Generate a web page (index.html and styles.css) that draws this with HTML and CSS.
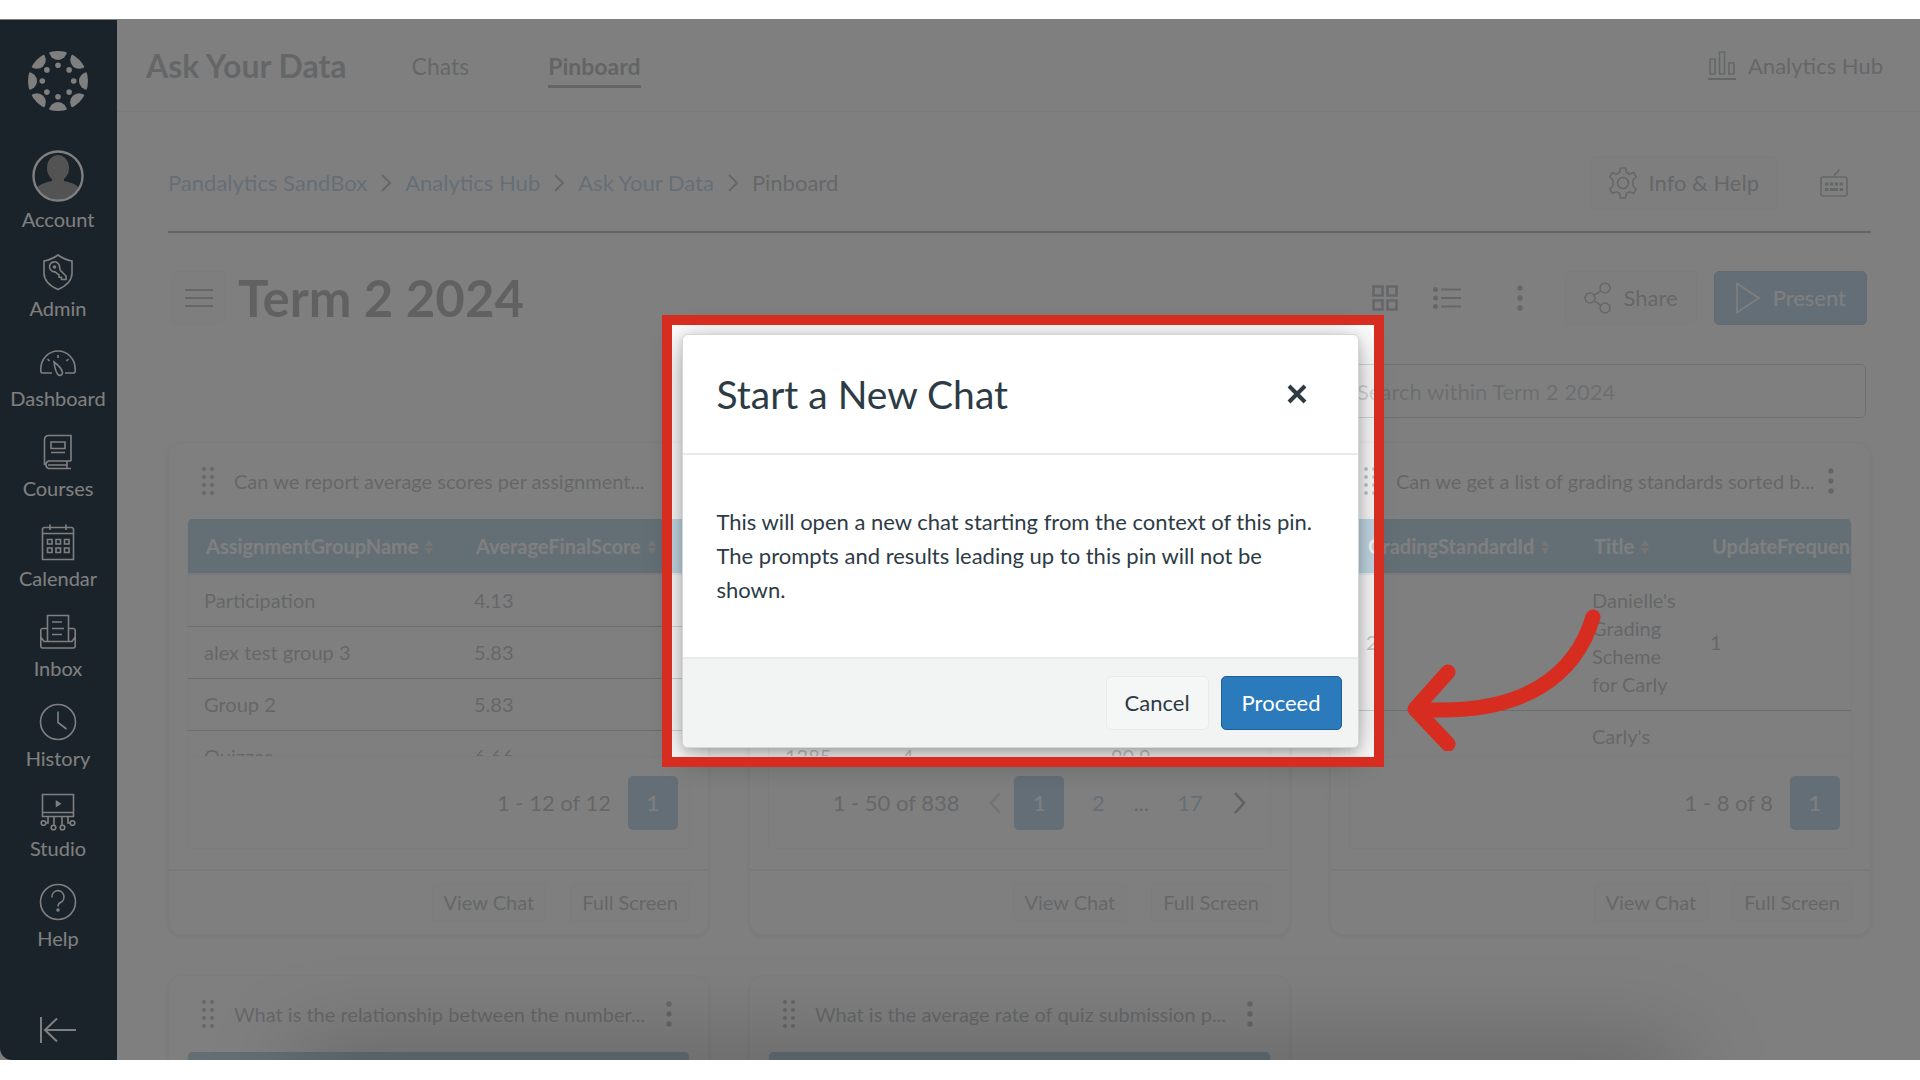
FILE: index.html
```html
<!DOCTYPE html>
<html lang="en">
<head>
<meta charset="utf-8">
<title>Ask Your Data - Pinboard</title>
<link rel="stylesheet" href="styles.css">
</head>
<body>
<svg class="defs" aria-hidden="true">
  <symbol id="grip" viewBox="0 0 14 30"><g fill="currentColor"><circle cx="3" cy="3" r="2"/><circle cx="11" cy="3" r="2"/><circle cx="3" cy="11" r="2"/><circle cx="11" cy="11" r="2"/><circle cx="3" cy="19" r="2"/><circle cx="11" cy="19" r="2"/><circle cx="3" cy="27" r="2"/><circle cx="11" cy="27" r="2"/></g></symbol>
  <symbol id="kebab" viewBox="0 0 6 28"><g fill="currentColor"><circle cx="3" cy="4" r="2.7"/><circle cx="3" cy="14" r="2.7"/><circle cx="3" cy="24" r="2.7"/></g></symbol>
  <symbol id="sort" viewBox="0 0 8 14"><path fill="currentColor" d="M4 0 8 6H0ZM4 14 0 8H8Z"/></symbol>
  <symbol id="chevron" viewBox="0 0 12 20"><path fill="none" stroke="currentColor" stroke-width="2" d="M2 2 10 10 2 18"/></symbol>
</svg>
<div class="frame">
  <nav class="sidebar" aria-label="Global navigation">
    <a class="logo" href="#" aria-label="Canvas">
      <svg viewBox="0 0 60 60" width="60" height="60">
        <clipPath id="disc"><circle cx="30" cy="30" r="30"/></clipPath>
        <g fill="#fff">
          <g clip-path="url(#disc)">
            <circle cx="30" cy="0" r="9"/><circle cx="51.2" cy="8.8" r="9"/><circle cx="60" cy="30" r="9"/><circle cx="51.2" cy="51.2" r="9"/>
            <circle cx="30" cy="60" r="9"/><circle cx="8.8" cy="51.2" r="9"/><circle cx="0" cy="30" r="9"/><circle cx="8.8" cy="8.8" r="9"/>
          </g>
          <circle cx="30" cy="14.3" r="2.8"/><circle cx="41.1" cy="18.9" r="2.8"/><circle cx="45.7" cy="30" r="2.8"/><circle cx="41.1" cy="41.1" r="2.8"/>
          <circle cx="30" cy="45.7" r="2.8"/><circle cx="18.9" cy="41.1" r="2.8"/><circle cx="14.3" cy="30" r="2.8"/><circle cx="18.9" cy="18.9" r="2.8"/>
        </g>
      </svg>
    </a>
    <a class="nav-item account" href="#">
      <svg viewBox="0 0 52 52" width="52" height="52">
        <clipPath id="face"><circle cx="26" cy="26" r="23.5"/></clipPath>
        <g clip-path="url(#face)" fill="#a6a6a6"><ellipse cx="26" cy="18" rx="11" ry="13"/><path d="M3 52V40C8 33 16 32 20 31V26H32V31C36 32 44 33 49 40V52Z"/></g>
        <circle cx="26" cy="26" r="24.5" fill="none" stroke="#fff" stroke-width="2.4"/>
      </svg>
      <span>Account</span>
    </a>
    <a class="nav-item" href="#">
      <svg viewBox="0 0 38 38" width="38" height="38"><path d="M19 2C23 5 28 7 33 8V20C33 28 27 33 19 36.500C11 33 5 28 5 20V8C10 7 15 5 19 2Z"/><path d="M21.500 17.500 27 23V26.500H22.500V24.500L20 24V22L16 18.800A5 5 0 1 1 20.500 13.500C20.800 15 20.500 16 21.500 17.500Z"/><circle cx="15.500" cy="14" r="1"/></svg>
      <span>Admin</span>
    </a>
    <a class="nav-item" href="#">
      <svg viewBox="0 0 38 38" width="38" height="38"><path d="M13 30H3.500C1.500 30 1.800 28 1.800 26A17.200 18 0 0 1 36.200 26C36.200 28 36.500 30 34.500 30H26"/><path d="M15 19C19 22 23 26 23.500 29.500A2.700 2.700 0 0 1 18.500 31C16.500 28 15.500 23 15 19Z"/><path d="M19 12V15M8.500 16 10.500 18M29.500 16 27.500 18"/></svg>
      <span>Dashboard</span>
    </a>
    <a class="nav-item" href="#">
      <svg viewBox="0 0 38 38" width="38" height="38"><path d="M32 28H9.500A4 4 0 0 0 9.500 35.500H32M28 28V35.500M5.500 32V6.500A4 4 0 0 1 9.500 2.500H32V28M9 32H28"/><path d="M12 9H26V15.500H12ZM12 19.500H26"/></svg>
      <span>Courses</span>
    </a>
    <a class="nav-item" href="#">
      <svg viewBox="0 0 38 38" width="38" height="38"><path d="M3.500 10.500H34.500V36.500H3.500ZM3.500 10.500V6A2 2 0 0 1 5.500 4.500H32.500A2 2 0 0 1 34.500 6V10.500M11 1.500V7M27 1.500V7"/><path d="M8.500 16.500H13V21H8.500ZM17 16.500H21.500V21H17ZM25.500 16.500H30V21H25.500ZM8.500 25H13V29.500H8.500ZM17 25H21.500V29.500H17ZM25.500 25H30V29.500H25.500Z"/></svg>
      <span>Calendar</span>
    </a>
    <a class="nav-item" href="#">
      <svg viewBox="0 0 38 38" width="38" height="38"><path d="M8.500 15.500H3.500A2 2 0 0 0 1.800 17V33A2 2 0 0 0 3.500 35H34.500A2 2 0 0 0 36.200 33V17A2 2 0 0 0 34.500 15.500H29.500M1.800 24 5 28.500H33L36.200 24"/><path d="M8.500 28V2.500H29.500V28M13 9H23M13 15.500H25M13 21.500H23"/></svg>
      <span>Inbox</span>
    </a>
    <a class="nav-item" href="#">
      <svg viewBox="0 0 38 38" width="38" height="38"><circle cx="19" cy="19" r="17.500"/><path d="M19 8.500V19.500L27.500 26"/></svg>
      <span>History</span>
    </a>
    <a class="nav-item" href="#">
      <svg viewBox="0 0 38 38" width="38" height="38"><path d="M3.500 1.500H34.500V23.500H3.500ZM3.500 19.500H34.500"/><path fill="#fff" d="M17.500 8.500 21 10.700 17.500 13Z"/><path d="M15 24V32M23 24V32M9 24V30H7M29 24V30H31"/><circle cx="4.500" cy="30" r="2.300"/><circle cx="14.500" cy="34.500" r="2.300"/><circle cx="23.500" cy="34.500" r="2.300"/><circle cx="33.500" cy="30" r="2.300"/></svg>
      <span>Studio</span>
    </a>
    <a class="nav-item" href="#">
      <svg viewBox="0 0 38 38" width="38" height="38"><circle cx="19" cy="19" r="17.500"/><path d="M13 14.500A6 6.200 0 1 1 21.500 19.500C19.500 20.500 19 21.500 19 23.500"/><circle cx="19" cy="27" r="1" fill="#fff"/></svg>
      <span>Help</span>
    </a>
    <button class="collapse" type="button" aria-label="Minimize navigation">
      <svg viewBox="0 0 38 28" width="38" height="28"><path d="M2 1V27M37 14H6M18 2.500 6 14 18 25.500"/></svg>
    </button>
  </nav>

  <div class="app">
    <header class="topbar">
      <h2 class="brand">Ask Your Data</h2>
      <a class="tab" href="#">Chats</a>
      <a class="tab current" href="#">Pinboard</a>
      <a class="hub" href="#">
        <svg viewBox="0 0 28 30" width="28" height="30" fill="none" stroke="currentColor" stroke-width="1.600"><path d="M2 8H7V23H2ZM11.500 1H16.500V23H11.500ZM21 12H26V23H21Z"/><path stroke-width="2" d="M0 28H28"/></svg>
        Analytics Hub
      </a>
    </header>

    <main class="content">
      <div class="crumb-row">
        <nav class="crumbs" aria-label="Breadcrumb">
          <a href="#">Pandalytics SandBox</a>
          <svg width="12" height="20"><use href="#chevron"/></svg>
          <a href="#">Analytics Hub</a>
          <svg width="12" height="20"><use href="#chevron"/></svg>
          <a href="#">Ask Your Data</a>
          <svg width="12" height="20"><use href="#chevron"/></svg>
          <span>Pinboard</span>
        </nav>
        <button class="btn" type="button">
          <svg viewBox="0 0 28 32" width="28" height="32" fill="none" stroke="currentColor" stroke-width="1.600"><path d="M11.500 1H16.500L17.500 5.500L20.500 7.200L24.800 5.600L27.200 10L24 13V19L27.200 22L24.800 26.400L20.500 24.800L17.500 26.500L16.500 31H11.500L10.500 26.500L7.500 24.800L3.200 26.400L.8 22L4 19V13L.8 10L3.200 5.600L7.500 7.200L10.500 5.500Z" stroke-linejoin="round"/><circle cx="14" cy="16" r="5.500"/></svg>
          Info &amp; Help
        </button>
        <button class="icon-btn keyboard" type="button" aria-label="Keyboard shortcuts">
          <svg viewBox="0 0 28 30" width="28" height="30" fill="none" stroke="currentColor" stroke-width="1.600"><rect x="1" y="9" width="26" height="19" rx="2"/><path d="M14 9C14 4 19 6 19 1"/><path stroke-width="3" d="M5 16H8.500M10 16H13M14.500 16H18M19.500 16H23M5 21.500H8.500M10 21.500H18M19.500 21.500H23"/></svg>
        </button>
      </div>

      <div class="title-row">
        <button class="btn square" type="button" aria-label="Menu">
          <svg viewBox="0 0 28 20" width="28" height="20" stroke="currentColor" stroke-width="2"><path d="M0 2H28M0 10H28M0 18H28"/></svg>
        </button>
        <h1>Term 2 2024</h1>
        <button class="icon-btn" type="button" aria-label="Grid view">
          <svg viewBox="0 0 26 26" width="26" height="26" fill="none" stroke="currentColor" stroke-width="2.600"><path d="M1.500 1.500H10.500V10.500H1.500ZM15.500 1.500H24.500V10.500H15.500ZM1.500 15.500H10.500V24.500H1.500ZM15.500 15.500H24.500V24.500H15.500Z"/></svg>
        </button>
        <button class="icon-btn list" type="button" aria-label="List view">
          <svg viewBox="0 0 28 22" width="28" height="22" fill="none" stroke="currentColor" stroke-width="2"><path d="M8 2.500H28M8 11H28M8 19.500H28"/><g fill="currentColor" stroke="none"><circle cx="2.500" cy="2.500" r="2.500"/><circle cx="2.500" cy="11" r="2.500"/><circle cx="2.500" cy="19.500" r="2.500"/></g></svg>
        </button>
        <button class="icon-btn more" type="button" aria-label="More options"><svg width="6" height="28"><use href="#kebab"/></svg></button>
        <button class="btn" type="button">
          <svg viewBox="0 0 28 32" width="28" height="32" fill="none" stroke="currentColor" stroke-width="1.600"><circle cx="6" cy="16" r="5"/><circle cx="21" cy="6" r="5"/><circle cx="21" cy="26" r="5"/><path d="M10.200 13.200 16.800 8.800M10.200 18.800 16.800 23.200"/></svg>
          Share
        </button>
        <button class="btn primary" type="button">
          <svg viewBox="0 0 26 32" width="26" height="32" fill="none" stroke="currentColor" stroke-width="1.600"><path d="M2 1.500 24 16 2 30.500Z"/></svg>
          Present
        </button>
      </div>

      <form class="search-row">
        <input class="search" type="search" placeholder="Search within Term 2 2024" aria-label="Search within Term 2 2024">
      </form>

      <div class="cards">
        <section class="card">
          <header class="card-head">
            <svg width="14" height="30"><use href="#grip"/></svg>
            <h3>Can we report average scores per assignment...</h3>
            <button class="icon-btn" type="button" aria-label="Pin options"><svg width="6" height="28"><use href="#kebab"/></svg></button>
          </header>
          <div class="panel">
            <div class="scroller">
              <table>
                <colgroup><col class="w-270"><col></colgroup>
                <thead><tr><th>AssignmentGroupName <svg width="8" height="14"><use href="#sort"/></svg></th><th>AverageFinalScore <svg width="8" height="14"><use href="#sort"/></svg></th></tr></thead>
                <tbody>
                  <tr><td>Participation</td><td>4.13</td></tr>
                  <tr><td>alex test group 3</td><td>5.83</td></tr>
                  <tr><td>Group 2</td><td>5.83</td></tr>
                  <tr><td>Quizzes</td><td>6.66</td></tr>
                </tbody>
              </table>
            </div>
            <div class="pager"><span class="range">1 - 12 of 12</span><button class="page on" type="button">1</button></div>
          </div>
          <footer class="card-foot"><button class="btn small" type="button">View Chat</button><button class="btn small" type="button">Full Screen</button></footer>
        </section>

        <section class="card">
          <header class="card-head">
            <svg width="14" height="30"><use href="#grip"/></svg>
            <h3></h3>
            <button class="icon-btn" type="button" aria-label="Pin options"><svg width="6" height="28"><use href="#kebab"/></svg></button>
          </header>
          <div class="panel">
            <div class="scroller">
              <table>
                <colgroup><col class="w-117"><col class="w-209"><col></colgroup>
                <thead><tr><th></th><th></th><th></th></tr></thead>
                <tbody>
                  <tr><td></td><td></td><td></td></tr>
                  <tr><td></td><td></td><td></td></tr>
                  <tr><td></td><td></td><td></td></tr>
                  <tr><td>1285</td><td>4</td><td>90.9</td></tr>
                </tbody>
              </table>
            </div>
            <div class="pager">
              <span class="range">1 - 50 of 838</span>
              <button class="step" type="button" aria-label="Previous page" disabled><svg viewBox="0 0 14 24" width="14" height="24"><path d="M12 2 3 12 12 22"/></svg></button>
              <button class="page on" type="button">1</button>
              <button class="page" type="button">2</button>
              <span class="dots">...</span>
              <button class="page" type="button">17</button>
              <button class="step next" type="button" aria-label="Next page"><svg viewBox="0 0 14 24" width="14" height="24"><path d="M2 2 11 12 2 22"/></svg></button>
            </div>
          </div>
          <footer class="card-foot"><button class="btn small" type="button">View Chat</button><button class="btn small" type="button">Full Screen</button></footer>
        </section>

        <section class="card">
          <header class="card-head">
            <svg width="14" height="30"><use href="#grip"/></svg>
            <h3>Can we get a list of grading standards sorted b...</h3>
            <button class="icon-btn" type="button" aria-label="Pin options"><svg width="6" height="28"><use href="#kebab"/></svg></button>
          </header>
          <div class="panel">
            <div class="scroller">
              <table class="wide">
                <colgroup><col class="w-226"><col class="w-118"><col></colgroup>
                <thead><tr><th>GradingStandardId <svg width="8" height="14"><use href="#sort"/></svg></th><th>Title <svg width="8" height="14"><use href="#sort"/></svg></th><th>UpdateFrequency</th></tr></thead>
                <tbody>
                  <tr><td>2</td><td>Danielle's Grading Scheme for Carly</td><td>1</td></tr>
                  <tr><td></td><td>Carly's</td><td></td></tr>
                </tbody>
              </table>
            </div>
            <div class="pager"><span class="range">1 - 8 of 8</span><button class="page on" type="button">1</button></div>
          </div>
          <footer class="card-foot"><button class="btn small" type="button">View Chat</button><button class="btn small" type="button">Full Screen</button></footer>
        </section>

        <section class="card">
          <header class="card-head">
            <svg width="14" height="30"><use href="#grip"/></svg>
            <h3>What is the relationship between the number...</h3>
            <button class="icon-btn" type="button" aria-label="Pin options"><svg width="6" height="28"><use href="#kebab"/></svg></button>
          </header>
          <div class="panel"><div class="scroller"><table><thead><tr><th></th></tr></thead></table></div></div>
        </section>

        <section class="card">
          <header class="card-head">
            <svg width="14" height="30"><use href="#grip"/></svg>
            <h3>What is the average rate of quiz submission p...</h3>
            <button class="icon-btn" type="button" aria-label="Pin options"><svg width="6" height="28"><use href="#kebab"/></svg></button>
          </header>
          <div class="panel"><div class="scroller"><table><thead><tr><th></th></tr></thead></table></div></div>
        </section>
      </div>
    </main>

    <div class="mask">
      <div class="modal-wrap">
        <div class="modal" role="dialog" aria-modal="true" aria-labelledby="modal-title">
          <header class="modal-head">
            <h2 id="modal-title">Start a New Chat</h2>
            <button class="icon-btn" type="button" aria-label="Close"><svg viewBox="0 0 20 20" width="20" height="20"><path fill="none" stroke="currentColor" stroke-width="4" d="M2 2 18 18M18 2 2 18"/></svg></button>
          </header>
          <p class="modal-body">This will open a new chat starting from the context of this pin. The prompts and results leading up to this pin will not be shown.</p>
          <footer class="modal-foot">
            <button class="btn cancel" type="button">Cancel</button>
            <button class="btn primary" type="button">Proceed</button>
          </footer>
        </div>
        <div class="spotlight"></div>
        <svg class="arrow" viewBox="0 0 200 150" width="200" height="150" fill="none" stroke="#d62d20" stroke-width="15" stroke-linecap="round" stroke-linejoin="round"><path d="M188 16C172 70 124 116 12 108M43 71 10 108 43 143"/></svg>
      </div>
    </div>
  </div>
</div>
</body>
</html>
```
FILE: styles.css
```css
* { box-sizing: border-box; }

body {
  margin: 0;
  height: 100vh;
  padding: 19px 0 20px;
  display: flex;
  overflow: hidden;
  background: #fff;
  color: #2d3b45;
  font: 22px/34px Lato, "Liberation Sans", sans-serif;
}

h1, h2, h3, p { margin: 0; }
a { color: inherit; text-decoration: none; }
button { font: inherit; color: inherit; cursor: pointer; }
svg { flex: none; display: block; }
.defs { position: absolute; width: 0; height: 0; }

.frame {
  position: relative;
  flex: 1;
  min-width: 0;
  display: flex;
  overflow: hidden;
  border-top: 1px solid #7b7f7e;
  background: #fff;
}

/* soft shade along the lower edge of the window */
.frame::after {
  content: "";
  position: absolute;
  left: 16%;
  right: 13%;
  top: 100%;
  height: 40px;
  box-shadow: 0 0 90px 10px rgba(0, 0, 0, .25);
}

/* Sidebar */
.sidebar {
  width: 117px;
  flex: none;
  display: flex;
  flex-direction: column;
  align-items: center;
  padding: 31px 1px 16px 0;
  border-bottom-left-radius: 12px;
  background: #364654;
  color: #fff;
}
.logo { margin-bottom: 39px; }
.nav-item {
  display: flex;
  flex-direction: column;
  align-items: center;
  gap: 5px;
  height: 90px;
  font-size: 20px;
  line-height: 24px;
}
.nav-item svg, .collapse svg { fill: none; stroke: #fff; stroke-width: 1.6; }
.nav-item.account { height: 103px; }
.nav-item.account svg { stroke: none; }
.collapse { margin-top: auto; padding: 0; border: 0; background: none; }
.collapse svg { stroke-width: 2; }

/* App header */
.app { position: relative; flex: 1; min-width: 0; }
.topbar {
  display: flex;
  align-items: center;
  height: 92px;
  padding: 0 37px 0 29px;
  border-bottom: 1px solid #d0d4d6;
}
.brand { font-size: 32px; line-height: 40px; margin-right: 65px; }
.tab { margin-right: 79px; border-bottom: 3px solid transparent; padding: 5px 0 2px; font-size: 23px; }
.current { font-weight: 700; border-color: #2d3b45; color: #1c262d; }
.hub { display: flex; align-items: center; gap: 12px; margin-left: auto; }

/* Page content */
.content { padding: 44px 49px 0 51px; }
.crumb-row {
  display: flex;
  align-items: center;
  padding-bottom: 21px;
  border-bottom: 2px solid #1c262d;
}
.crumbs { display: flex; align-items: center; gap: 13px; margin-right: auto; }
.crumbs a { color: #2b7abc; }

.btn {
  display: flex;
  align-items: center;
  justify-content: center;
  gap: 12px;
  height: 54px;
  padding: 0 18px;
  border: 1px solid #dde1e3;
  border-radius: 5px;
  background: #f5f5f5;
}
.btn.square { width: 54px; padding: 0; }
.btn.small { height: 40px; padding: 0 11px; font-size: 20px; }
.btn.primary { padding: 0 20px; background: #2b7abc; border-color: #1d5f99; color: #fff; }
.icon-btn { display: flex; padding: 0; border: 0; background: none; }
.keyboard { margin: 0 23px 0 42px; }

.title-row { display: flex; align-items: center; padding: 38px 4px 39px; }
.title-row h1 { font-size: 51px; line-height: 54px; margin: 0 auto 0 12px; color: #111; }
.title-row .list { margin: 0 56px 0 35px; }
.title-row .more { margin-right: 42px; }
.title-row .primary { margin-left: 17px; }

.search-row { display: flex; justify-content: flex-end; padding-right: 5px; }
.search {
  width: 570px;
  height: 54px;
  padding: 0 12px 0 60px;
  border: 1px solid #6a7883;
  border-radius: 5px;
  background: none;
  font: inherit;
}
.search::placeholder { color: #6a7883; opacity: 1; }

/* Pin cards */
.cards {
  display: grid;
  grid-template-columns: repeat(3, minmax(0, 1fr));
  gap: 40px;
  margin-top: 24px;
}
.card {
  border: 1px solid #dde1e3;
  border-radius: 14px;
  box-shadow: 0 2px 4px rgba(0, 0, 0, .25);
}
.card-head {
  display: flex;
  align-items: center;
  gap: 19px;
  height: 76px;
  padding: 0 36px 0 32px;
}
.card-head h3 {
  flex: 1;
  min-width: 0;
  white-space: nowrap;
  font-size: 20px;
  font-weight: 400;
}
.panel {
  margin: 0 18px 20px;
  border: 1px solid #e3e6e8;
  border-top: 0;
  border-radius: 5px;
  overflow: hidden;
}
.scroller { height: 238px; overflow: hidden; border-bottom: 1px solid #e3e6e8; }
table { width: 100%; table-layout: fixed; border-spacing: 0; font-size: 20px; line-height: 28px; }
table.wide { width: 560px; }
th, td { padding: 11px 18px 12px 16px; text-align: left; font-weight: 400; }
td { height: 52px; border-bottom: 1px solid #5c6872; }
th {
  height: 56px;
  padding-left: 18px;
  border-bottom: 2px solid #c7cdd1;
  background: #2378ad;
  background-clip: padding-box;
  color: #fff;
  font-weight: 700;
  white-space: nowrap;
}
th svg { display: inline-block; color: #b9b0a8; margin-left: 2px; }
.w-117 { width: 117px; }
.w-118 { width: 118px; }
.w-209 { width: 209px; }
.w-226 { width: 226px; }
.w-270 { width: 270px; }

.pager { display: flex; align-items: center; justify-content: flex-end; height: 91px; padding-right: 11px; }
.range { margin-right: 17px; }
.page {
  min-width: 50px;
  height: 54px;
  padding: 0 12px;
  border: 0;
  border-radius: 5px;
  background: none;
  color: #2b7abc;
}
.page.on { background: #2b7abc; color: #fff; }
.page + .page { margin-left: 9px; }
.dots { padding: 0 16px 0 10px; }
.step { display: flex; padding: 0 12px; border: 0; background: none; color: #111; }
.step.next { padding-left: 18px; }
.step:disabled { color: #8b969e; }
.step svg { fill: none; stroke: currentColor; stroke-width: 2.6; }
.card-foot {
  display: flex;
  justify-content: flex-end;
  gap: 24px;
  padding: 11px 18px 12px;
  border-top: 2px solid #c7cdd1;
}

/* Dialog */
.mask {
  position: absolute;
  inset: 0;
  display: grid;
  place-items: center;
  padding: 1px 0 0 3px;
  background: rgba(255, 255, 255, .75);
}
.modal-wrap { position: relative; width: 677px; }
.modal {
  border: 1px solid #d5d8da;
  border-radius: 6px;
  background: #fff;
  box-shadow: 0 8px 36px rgba(0, 0, 0, .35), 0 3px 8px rgba(0, 0, 0, .15);
  overflow: hidden;
}
.modal-head {
  display: flex;
  align-items: center;
  justify-content: space-between;
  height: 120px;
  padding: 0 51px 0 34px;
  border-bottom: 2px solid #e8eaec;
}
.modal-head h2 { font-size: 39px; line-height: 48px; font-weight: 400; }
.modal-body { padding: 50px 34px; }
.modal-foot {
  display: flex;
  justify-content: flex-end;
  gap: 12px;
  padding: 17px 16px;
  border-top: 2px solid #e8eaec;
  background: #f2f4f4;
}
.btn.cancel { background: #f5f6f6; border-color: #e8eaec; }

.spotlight {
  position: absolute;
  inset: -19px -25px -19px -20px;
  border: 10px solid #d62d20;
  box-shadow: 0 0 0 4000px rgba(0, 0, 0, .5);
  pointer-events: none;
}
.arrow { position: absolute; left: calc(100% + 46px); bottom: -3px; }
```
